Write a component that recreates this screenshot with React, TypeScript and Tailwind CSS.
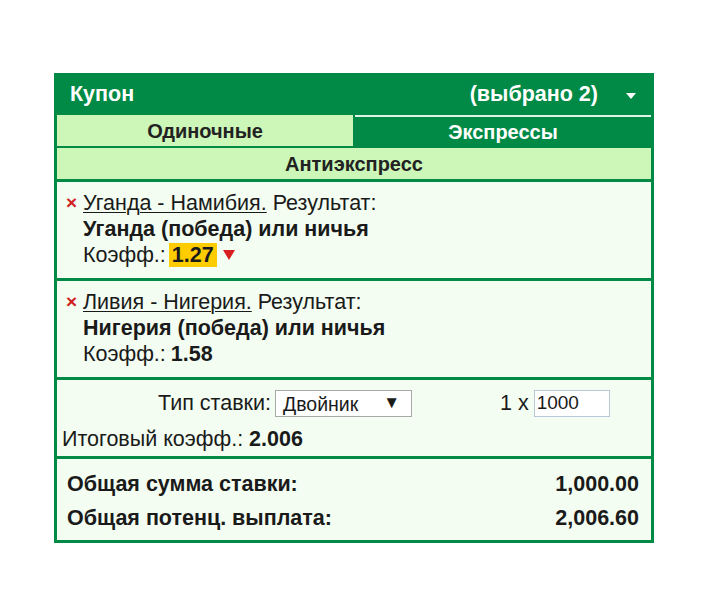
import { ReactNode } from "react"

const Bet = ({
  match,
  pick,
  odds,
  drop,
}: {
  match: string
  pick: string
  odds: string
  drop?: boolean
}) => (
  <div className="flex border-b-[3px] border-[#008a46] bg-[#f3fdf1] pl-[9px] pt-[8px] pb-[10px] leading-[26px]">
    <span className="w-[17px] shrink-0 text-[19px] font-bold text-[#d02020]">×</span>
    <div>
      <div>
        <span className="underline decoration-1 underline-offset-2">{match}</span> Результат:
      </div>
      <div className="font-bold">{pick}</div>
      <div className="flex h-[26px] items-center">
        Коэфф.:
        {drop ? (
          <>
            <span className="ml-[3px] bg-[#ffcc00] px-[3px] font-bold leading-[24px]">{odds}</span>
            <svg width="14" height="12" viewBox="0 0 14 12" className="ml-[5px]">
              <path d="M1 1 L13 1 L7 11 Z" fill="#d81e1e" />
            </svg>
          </>
        ) : (
          <span className="ml-[5px] font-bold">{odds}</span>
        )}
      </div>
    </div>
  </div>
)

const Row = ({ children }: { children: ReactNode }) => (
  <div className="flex justify-between font-bold">{children}</div>
)

export default function App() {
  return (
    <div className="min-h-screen bg-white pt-[73px] pl-[54px] font-['Liberation_Sans',Arial,sans-serif] text-[21.5px] text-[#1a1a1a]">
      <div className="w-[600px] border-x-[3px] border-b-[3px] border-[#008a46] bg-[#008a46]">
        <div className="flex h-[42px] items-center pl-[13px] pr-[14px] font-bold text-white">
          <span>Купон</span>
          <span className="ml-auto">(выбрано 2)</span>
          <svg width="12" height="8" viewBox="0 0 12 8" className="ml-[27px] mt-[4px]">
            <path d="M1 1 L11 1 L6 7 Z" fill="white" />
          </svg>
        </div>
        <div className="flex h-[31px] text-[20px] font-bold">
          <div className="flex w-[296px] items-center justify-center bg-[#ccf7b8] text-[#222]">
            Одиночные
          </div>
          <div className="ml-[2px] flex flex-1 items-center justify-center border-t-2 border-[#dff5e6] text-white">
            Экспрессы
          </div>
        </div>
        <div className="mt-[2px] flex h-[31px] items-center justify-center bg-[#ccf7b8] text-[20px] font-bold text-[#222]">
          Антиэкспресс
        </div>
        <div className="h-[3px]" />
        <Bet match="Уганда - Намибия." pick="Уганда (победа) или ничья" odds="1.27" drop />
        <Bet match="Ливия - Нигерия." pick="Нигерия (победа) или ничья" odds="1.58" />
        <div className="border-b-[3px] border-[#008a46] bg-[#f3fdf1] px-[5px] pt-[7px] pb-[4px]">
          <div className="flex items-center">
            <span className="ml-[96px]">Тип ставки:</span>
            <div className="ml-[4px] flex h-[27px] w-[137px] items-center justify-between border border-[#a8a8a8] bg-white pl-[7px] pr-[11px] text-[19.5px]">
              <span className="mt-[2px]">Двойник</span>
              <span className="text-[17px]">▼</span>
            </div>
            <span className="ml-[88px]">1 x</span>
            <input
              readOnly
              value="1000"
              className="ml-[5px] h-[27px] w-[76px] border border-[#b8c8d8] bg-white px-[2px] text-[19px] outline-none"
            />
          </div>
          <div className="mt-[7px] leading-[26px]">
            Итоговый коэфф.: <span className="font-bold">2.006</span>
          </div>
        </div>
        <div className="flex flex-col gap-[8px] bg-[#f3fdf1] pl-[10px] pr-[12px] pt-[12px] pb-[9px] leading-[26px]">
          <Row>
            <span>Общая сумма ставки:</span>
            <span>1,000.00</span>
          </Row>
          <Row>
            <span>Общая потенц. выплата:</span>
            <span>2,006.60</span>
          </Row>
        </div>
      </div>
    </div>
  )
}
